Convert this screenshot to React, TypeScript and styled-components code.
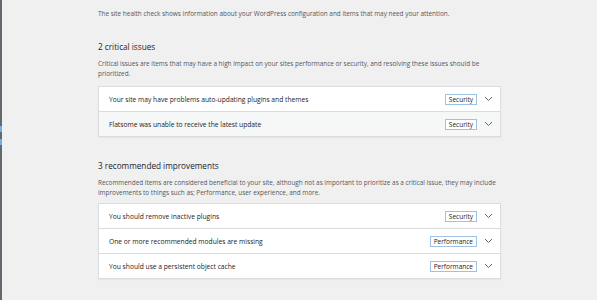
import React from "react";
import styled, { createGlobalStyle } from "styled-components";

const Global = createGlobalStyle`
  html, body { margin: 0; padding: 0; background: #f0f0f1; }
  body { font-family: "Open Sans", "Noto Sans", sans-serif; color: #3c434a; }
`;

const Page = styled.div`
  display: flex;
  width: 597px;
  height: 300px;
  overflow: hidden;
  background: #f0f0f1;
`;

const SideEdge = styled.div`
  width: 2px;
  flex: none;
  background: #646970;
  display: flex;
  flex-direction: column;
  padding-top: 126px;
  gap: 7px;
`;

const SideMark = styled.div`
  height: 6px;
  background: #72aee6;
`;

const Main = styled.div`
  flex: 1;
  padding: 9px 0 0 96px;
  display: flex;
  flex-direction: column;
`;

const Intro = styled.p`
  margin: 0;
  font-size: 6.4px;
  line-height: 10px;
  color: #50575e;
`;

const Section = styled.section<{ $top: number }>`
  margin-top: ${(p) => p.$top}px;
  width: 403px;
  display: flex;
  flex-direction: column;
`;

const Heading = styled.h2`
  margin: 0;
  font-size: 8.2px;
  line-height: 14px;
  font-weight: 400;
  color: #1d2327;
`;

const Desc = styled.p`
  margin: 5px 0 0;
  width: 400px;
  font-size: 6.4px;
  line-height: 10px;
  color: #50575e;
`;

const Panel = styled.div<{ $gap: number }>`
  margin-top: ${(p) => p.$gap}px;
  background: #fff;
  border: 1px solid #dcdcde;
  box-shadow: 0 1px 1px rgba(0, 0, 0, 0.04);
  display: flex;
  flex-direction: column;
`;

const Row = styled.div<{ $alt?: boolean }>`
  height: 24px;
  display: flex;
  align-items: center;
  padding: 0 0 0 10px;
  background: ${(p) => (p.$alt ? "#f6f7f7" : "#fff")};
  & + & { border-top: 1px solid #dcdcde; }
`;

const RowTitle = styled.span`
  flex: 1;
  font-size: 6.7px;
  color: #1d2327;
`;

const Badge = styled.span`
  font-size: 6.5px;
  line-height: 9px;
  padding: 0 3px;
  border: 1px solid #9ec2e6;
  background: #fff;
  color: #1d2327;
`;

const Chevron = styled.span`
  width: 23px;
  display: flex;
  justify-content: center;
  align-items: center;
`;

const ChevronIcon = () => (
  <svg width="9" height="6" viewBox="0 0 9 6">
    <path d="M1 1 L4.5 4.5 L8 1" fill="none" stroke="#646970" strokeWidth="1" />
  </svg>
);

type Item = { title: string; badge: string; alt?: boolean };

const critical: Item[] = [
  { title: "Your site may have problems auto-updating plugins and themes", badge: "Security" },
  { title: "Flatsome was unable to receive the latest update", badge: "Security", alt: true },
];

const recommended: Item[] = [
  { title: "You should remove inactive plugins", badge: "Security" },
  { title: "One or more recommended modules are missing", badge: "Performance" },
  { title: "You should use a persistent object cache", badge: "Performance" },
];

const Items = ({ items, gap }: { items: Item[]; gap: number }) => (
  <Panel $gap={gap}>
    {items.map((it) => (
      <Row key={it.title} $alt={it.alt}>
        <RowTitle>{it.title}</RowTitle>
        <Badge>{it.badge}</Badge>
        <Chevron>
          <ChevronIcon />
        </Chevron>
      </Row>
    ))}
  </Panel>
);

export default function App() {
  return (
    <Page>
      <Global />
      <SideEdge>
        <SideMark />
        <SideMark />
      </SideEdge>
      <Main>
        <Intro>
          The site health check shows information about your WordPress configuration and items that may need your attention.
        </Intro>
        <Section $top={21}>
          <Heading>2 critical issues</Heading>
          <Desc>
            Critical issues are items that may have a high impact on your sites performance or security, and resolving these issues should be prioritized.
          </Desc>
          <Items items={critical} gap={7} />
        </Section>
        <Section $top={22}>
          <Heading>3 recommended improvements</Heading>
          <Desc>
            Recommended items are considered beneficial to your site, although not as important to prioritize as a critical issue, they may include improvements to things such as; Performance, user experience, and more.
          </Desc>
          <Items items={recommended} gap={5} />
        </Section>
      </Main>
    </Page>
  );
}
